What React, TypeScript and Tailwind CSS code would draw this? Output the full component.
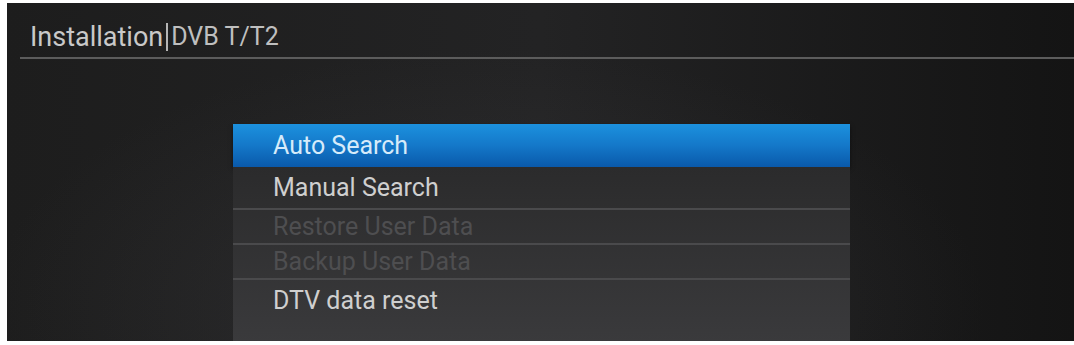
import React from "react";

const items = [
  { label: "Manual Search", h: "h-[41px]", disabled: false },
  { label: "Restore User Data", h: "h-[35px]", disabled: true },
  { label: "Backup User Data", h: "h-[35px]", disabled: true },
  { label: "DTV data reset", h: "h-[44px]", disabled: false },
];

export default function App() {
  return (
    <div
      className="w-[1074px] h-[345px] bg-white pt-[3px] pl-[7px] overflow-hidden"
      style={{ fontFamily: "Roboto, 'Noto Sans', sans-serif" }}
    >
      <div className="relative w-[1067px] h-[338px] bg-gradient-to-r from-[#1d1d1d] via-[#232324] to-[#141414] overflow-hidden">
        <div className="absolute inset-0 bg-[radial-gradient(ellipse_at_45%_90%,rgba(70,70,74,0.35),transparent_60%)]" />
        <div className="relative">
          <div className="pt-[19px] pl-[23px] flex items-center h-[49px] text-[27px] leading-[30px] text-[#c9c9c9]">
            <span>Installation</span>
            <span className="mx-[3px] w-[2px] h-[28px] bg-[#b5b5b5]" />
            <span className="text-[25px] text-[#bfbfbf]">DVB T/T2</span>
          </div>
          <div className="mt-[5px] ml-[13px] h-[2px] bg-[#5c5c5c]" />
          <div className="ml-[226px] mt-[65px] w-[617px]">
            <div className="h-[43px] flex items-center pl-[40px] bg-gradient-to-b from-[#1c91de] via-[#1478c9] to-[#0a59aa] text-[25px] leading-[28px] text-[#d6ebfa] shadow-[0_2px_4px_rgba(0,0,0,0.5)]">
              Auto Search
            </div>
            <div className="bg-gradient-to-b from-[#2b2b2c] to-[#3a3a3c] h-[175px]">
              {items.map((it, i) => (
                <div
                  key={it.label}
                  className={`${it.h} flex items-center pl-[40px] text-[25px] leading-[28px] ${
                    i > 0 ? "border-t-2 border-[#4a4a4c]" : ""
                  } ${it.disabled ? "text-[#4e4e50]" : "text-[#cfcfcf]"}`}
                >
                  {it.label}
                </div>
              ))}
            </div>
          </div>
        </div>
      </div>
    </div>
  );
}
